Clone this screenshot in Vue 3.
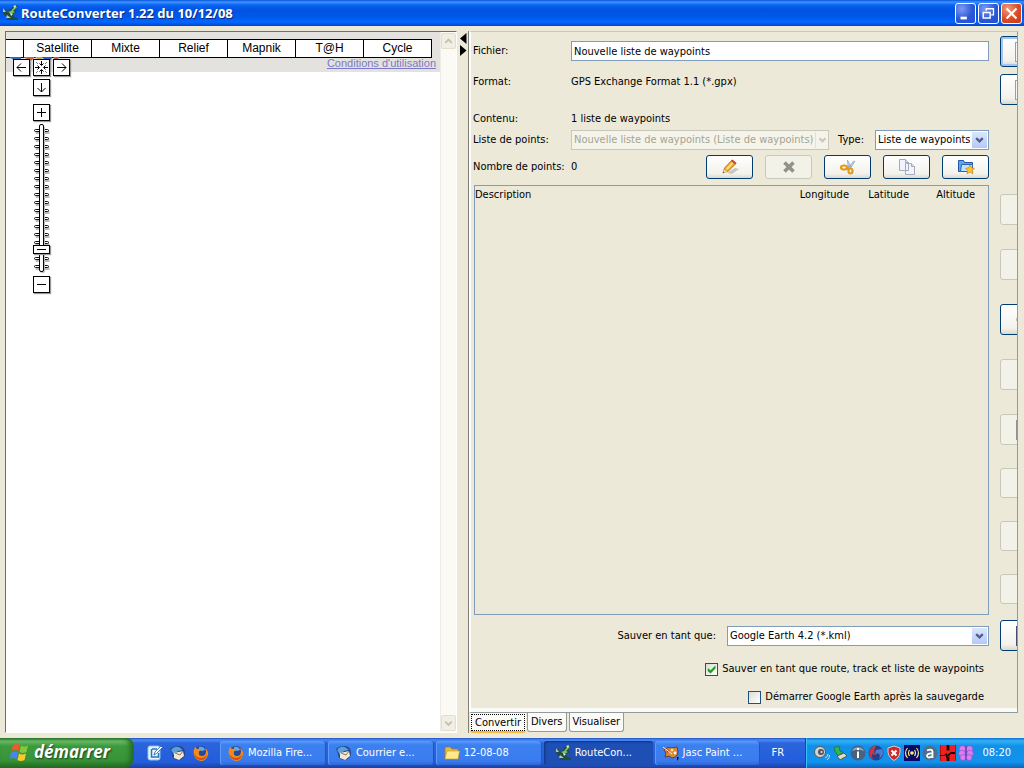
<script setup>
import { ref } from 'vue'

const mapTypes = ['Satellite', 'Mixte', 'Relief', 'Mapnik', 'T@H', 'Cycle']
const zoomTicks = Array.from({ length: 18 }, (_, i) => 6 + i * 8)
const zoomLevel = ref(2)
const fileName = ref('Nouvelle liste de waypoints')
const saveAll = ref(true)
const launchEarth = ref(false)
const columns = [
  { label: 'Description', name: 'desc' },
  { label: 'Longitude', name: 'lon' },
  { label: 'Latitude', name: 'lat' },
  { label: 'Altitude', name: 'alt' }
]
const sideGroups = [
  { name: 'files', items: [{ label: 'Ouvrir', kind: 'focus', mark: 'page' }, { label: 'Nouveau', kind: 'on', mark: 'page' }] },
  {
    name: 'moves',
    items: [
      { label: 'Premier', kind: 'off' },
      { label: 'Monter', kind: 'off' },
      { label: 'Ajouter', kind: 'on', mark: 'dot' },
      { label: 'Supprimer', kind: 'off' },
      { label: 'Descendre', kind: 'off', mark: 'bar' }
    ]
  },
  { name: 'orders', items: [{ label: 'Dernier', kind: 'off' }, { label: 'Inverser', kind: 'off' }, { label: 'Trier', kind: 'off' }] },
  { name: 'save', items: [{ label: 'Sauver', kind: 'on', mark: 'disk' }] }
]
</script>

<template>
  <div class="screen">
    <header class="titlebar">
      <svg class="icon" viewBox="0 0 16 16" aria-hidden="true">
        <path d="M1 3l4 3 3-1 4-5 4 1-3 4 2 2-4 2 1 3 4 1v2H5l1-3-4-2z" fill="#234a3c" />
        <path d="M2 4l4 3 3-1 4-5 2 1-4 4 2 1-4 2z" fill="#78c46a" />
        <path d="M8 8l3 1-2 2zM11 1l3-1-1 3z" fill="#d8efe0" /><path d="M1 3l3 4H1zM5 10l4 3H4z" fill="#a9c7c0" />
      </svg>
      <h1>RouteConverter 1.22 du 10/12/08</h1>
      <button class="win" aria-label="Réduire"><svg viewBox="0 0 21 21"><path d="M5 14h7v3H5z" fill="#fff" /></svg></button>
      <button class="win" aria-label="Restaurer">
        <svg viewBox="0 0 21 21" fill="none" stroke="#fff"><path d="M8 7.500V5h8v7h-2.500M8 5.500h8" stroke-width="1.400" /><path d="M4.700 9.500h7.600v6H4.700zM4.500 9.500h8" stroke-width="1.600" /></svg>
      </button>
      <button class="win close" aria-label="Fermer"><svg viewBox="0 0 21 21"><path d="M5 5l11 11M16 5L5 16" stroke="#fff" stroke-width="2.400" /></svg></button>
    </header>

    <main class="work">
      <section class="mapframe" aria-label="Carte">
        <div class="map">
          <div class="strip">
            <div class="types">
              <button class="type first" aria-label="Plan"></button>
              <button v-for="t in mapTypes" :key="t" class="type">{{ t }}</button>
            </div>
            <a class="terms" href="#">Conditions d'utilisation</a>
          </div>
          <div class="controls">
            <svg class="logo" viewBox="0 0 56 8" aria-hidden="true">
              <path d="M0 0h12v3l-4 2z" fill="#3466b8" /><path d="M14 0h12l-4 4z" fill="#c8623c" /><path d="M26 0h8l-3 5z" fill="#d3a545" /><path d="M34 0h9l-2 7-5-1z" fill="#315fa8" /><path d="M44 0h7l-4 4z" fill="#b75b41" />
            </svg>
            <div class="pan">
              <button class="pad" aria-label="Gauche"><svg viewBox="0 0 15 15"><path d="M12 7.500H3M7 3.500l-4 4 4 4" /></svg></button>
              <button class="pad" aria-label="Centrer"><svg viewBox="0 0 15 15"><path d="M7.500 1v4M5.500 3.500l2 2 2-2M7.500 14v-4M5.500 11.500l2-2 2 2M1 7.500h4M3.500 5.500l2 2-2 2M14 7.500h-4M11.500 5.500l-2 2 2 2M2.500 2.500l1 1M12.500 2.500l-1 1M2.500 12.500l1-1M12.500 12.500l-1-1" /></svg></button>
              <button class="pad" aria-label="Droite"><svg viewBox="0 0 15 15"><path d="M3 7.500h9M8 3.500l4 4-4 4" /></svg></button>
            </div>
            <button class="pad" aria-label="Bas"><svg viewBox="0 0 15 15"><path d="M7.500 3v9M3.500 8l4 4 4-4" /></svg></button>
            <button class="pad plus" aria-label="Zoom avant"><svg viewBox="0 0 15 15"><path d="M7.500 3v9M3 7.500h9" /></svg></button>
            <div class="scale">
              <svg viewBox="0 0 17 149" aria-hidden="true">
                <g v-for="y in zoomTicks" :key="y">
                  <rect x="2.500" :y="y + 1" width="14" height="3" rx="1" fill="#bbb" />
                  <rect x="1.500" :y="y - 0.500" width="14" height="2" rx="1" fill="#fff" stroke="#111" />
                </g>
                <rect x="7" y="2" width="5" height="147" rx="2" fill="#bbb" />
                <rect x="6.500" y="0.500" width="4" height="147" rx="1.500" fill="#fff" stroke="#000" />
              </svg>
              <input v-model="zoomLevel" type="range" min="0" max="15" aria-label="Niveau de zoom" />
            </div>
            <button class="pad" aria-label="Zoom arrière"><svg viewBox="0 0 15 15"><path d="M3 7.500h9" /></svg></button>
          </div>
        </div>
        <div class="scrollbar">
          <button aria-label="Défiler vers le haut"><svg viewBox="0 0 14 14"><path d="M3.500 9L7 5.500 10.500 9" /></svg></button>
          <button aria-label="Défiler vers le bas"><svg viewBox="0 0 14 14"><path d="M3.500 5.500L7 9l3.500-3.500" /></svg></button>
        </div>
      </section>

      <div class="divider">
        <button aria-label="Replier à gauche"><svg viewBox="0 0 7 11"><path d="M6.500 0v11L0 5.500z" /></svg></button>
        <button aria-label="Replier à droite"><svg viewBox="0 0 7 11"><path d="M0 0v11l6.500-5.500z" /></svg></button>
      </div>

      <section class="right">
        <div class="panel">
          <form class="form" @submit.prevent>
            <div class="row file"><label for="file">Fichier:</label><input id="file" v-model="fileName" type="text" /></div>
            <div class="row format"><span>Format:</span><span>GPS Exchange Format 1.1 (*.gpx)</span></div>
            <div class="row content"><span>Contenu:</span><span>1 liste de waypoints</span></div>
            <div class="row list">
              <label for="list">Liste de points:</label>
              <div class="pair">
                <span class="combo off grow">
                  <select id="list" disabled><option>Nouvelle liste de waypoints (Liste de waypoints)</option></select>
                  <i><svg viewBox="0 0 15 17"><path d="M4 6.500L7.500 10 11 6.500" /></svg></i>
                </span>
                <label for="type">Type:</label>
                <span class="combo kind">
                  <select id="type"><option>Liste de waypoints</option></select>
                  <i><svg viewBox="0 0 15 17"><path d="M4 6.500L7.500 10 11 6.500" /></svg></i>
                </span>
              </div>
            </div>
            <div class="row count">
              <span>Nombre de points:</span>
              <div class="pair">
                <span class="grow">0</span>
                <div class="tools">
                  <button type="button" class="tool" aria-label="Renommer">
                    <svg viewBox="0 0 18 16"><path d="M6 14l8-5 4 1-7 5z" fill="#c9c5b8" /><path d="M2 14l1.500-5L11 1l4 3.500L7.500 12z" fill="#f0a52c" stroke="#99611c" stroke-width=".7" /><path d="M5 9.500L12 2l1.500 1L6.500 11z" fill="#ffdc78" /><path d="M10 2l1.500-1.500L15.500 4 14 5.500z" fill="#d8412c" /><path d="M2 14l1-3.500L6 13z" fill="#f6dfb8" /><path d="M2 14l.5-1.500 1 1z" fill="#333" /></svg>
                  </button>
                  <button type="button" class="tool" disabled aria-label="Supprimer"><svg viewBox="0 0 18 16"><path d="M4.500 3.500l9 9M13.500 3.500l-9 9" stroke="#929289" stroke-width="3.600" /></svg></button>
                  <button type="button" class="tool" aria-label="Couper">
                    <svg viewBox="0 0 18 16"><path d="M9 9l5-6 2-1-5 8zM9 8L8.500 1l3.500 7z" fill="#c3d3ea" stroke="#8293b1" stroke-width=".6" /><g fill="none" stroke="#e69917" stroke-width="2.200"><ellipse cx="5" cy="8.500" rx="3" ry="2" /><ellipse cx="11.500" cy="12" rx="2" ry="2.500" /><path d="M7.500 9.500l3 1" /></g></svg>
                  </button>
                  <button type="button" class="tool" aria-label="Copier">
                    <svg viewBox="0 0 18 16"><path d="M1.500.5h6l3 3v8h-9zM7.500 4.500h6l3 3v8h-9z" fill="#f2f4fb" stroke="#a6aabd" /><path d="M7.500.5v3h3M13.500 4.500v3h3" fill="#dde2f4" stroke="#a6aabd" /></svg>
                  </button>
                  <button type="button" class="tool" aria-label="Ajouter aux favoris">
                    <svg viewBox="0 0 18 16"><path d="M1.500 1.500h5l1 2h8v9h-14z" fill="#5aa7ee" stroke="#2257a5" /><path d="M4.500 5.500h11v7h-12z" fill="#bfe2ff" stroke="#2b66b5" /><path d="M13 6l1.500 3 3 .3-2.200 2.200.7 3.300-3-1.700-3 1.700.7-3.300-2.200-2.200 3-.3z" fill="#ffc62e" stroke="#d88b16" stroke-width=".8" /></svg>
                  </button>
                </div>
              </div>
            </div>
            <div class="tablebox">
              <table>
                <thead><tr><th v-for="c in columns" :key="c.name" :class="c.name" scope="col">{{ c.label }}</th></tr></thead>
                <tbody></tbody>
              </table>
            </div>
            <div class="saverow">
              <label for="save">Sauver en tant que:</label>
              <span class="combo target">
                <select id="save"><option>Google Earth 4.2 (*.kml)</option></select>
                <i><svg viewBox="0 0 15 17"><path d="M4 6.500L7.500 10 11 6.500" /></svg></i>
              </span>
            </div>
            <label class="check"><input v-model="saveAll" type="checkbox" />Sauver en tant que route, track et liste de waypoints</label>
            <label class="check"><input v-model="launchEarth" type="checkbox" />Démarrer Google Earth après la sauvegarde</label>
          </form>
          <aside class="side">
            <div v-for="g in sideGroups" :key="g.name" class="group" :class="g.name">
              <button v-for="b in g.items" :key="b.label" class="edge" :class="[b.kind, b.mark]" :aria-label="b.label"></button>
            </div>
          </aside>
        </div>
        <nav class="tabs">
          <button class="tab active"><span>Convertir</span></button>
          <button class="tab">Divers</button>
          <button class="tab">Visualiser</button>
        </nav>
      </section>
    </main>

    <footer class="taskbar">
      <button class="start">
        <svg viewBox="0 0 20 18" aria-hidden="true"><path d="M3 2q3-2 7 0L8.500 8Q5 6 1.500 8z" fill="#ee5a2c" /><path d="M11 2.500q3 2 7 0L16.500 9q-4 2-7 0z" fill="#83c83c" /><path d="M1.200 9.500q3-2 7 0L6.500 16q-3.500-2-7 0z" fill="#4a86ea" /><path d="M9 10.500q3 2 7 0L14.500 17q-4 2-7 0z" fill="#fac92c" /></svg>
        <span>démarrer</span>
      </button>
      <div class="quick">
        <button aria-label="Bureau"><svg class="icon" viewBox="0 0 16 16"><rect x="1" y="1" width="12" height="14" rx="2" fill="#e8f5ff" stroke="#8dc1ed" /><path d="M5 4h5M4.500 4v8h7V8" fill="none" stroke="#2b73b8" stroke-width="1.500" /><path d="M7 10l1-3 6-6 1.500 1.500-6 6z" fill="#fff" stroke="#2a6fb0" stroke-width=".9" /></svg></button>
        <button aria-label="Thunderbird"><svg class="icon" viewBox="0 0 16 16"><path d="M0 4Q3 1 9 1q6 1 6 7 0 6-7 7-6-1-6-6z" fill="#23457e" /><path d="M1 5Q4 1 9 2l4 3-5 1-4 4z" fill="#5aa0df" /><path d="M4 8l9-2 1 5-5 4-5-2z" fill="#f3e8d5" /><path d="M5 8l5 2 3-4" fill="none" stroke="#8f775d" /></svg></button>
        <button aria-label="Firefox"><svg class="icon" viewBox="0 0 16 16"><circle cx="8" cy="8" r="7" fill="#264a9a" /><path d="M6 2q5-1 6 3l-3 1-3-1z" fill="#63a8e6" /><path d="M2 2l2 2q3-1 4 1L6 6.500Q5 11 9 11q4 0 4-5l-1-3q4 3 3 7-2 6-7 6-6-1-7-6Q0 5 2 2z" fill="#f28a1c" /><path d="M1 8q1 7 7 7 5 0 6-6-2 4-6 4-5 0-7-5z" fill="#d24d16" /></svg></button>
      </div>
      <div class="tasks">
        <button class="task"><svg class="icon" viewBox="0 0 16 16"><circle cx="8" cy="8" r="7" fill="#264a9a" /><path d="M6 2q5-1 6 3l-3 1-3-1z" fill="#63a8e6" /><path d="M2 2l2 2q3-1 4 1L6 6.500Q5 11 9 11q4 0 4-5l-1-3q4 3 3 7-2 6-7 6-6-1-7-6Q0 5 2 2z" fill="#f28a1c" /><path d="M1 8q1 7 7 7 5 0 6-6-2 4-6 4-5 0-7-5z" fill="#d24d16" /></svg>Mozilla Fire...</button>
        <button class="task"><svg class="icon" viewBox="0 0 16 16"><path d="M0 4Q3 1 9 1q6 1 6 7 0 6-7 7-6-1-6-6z" fill="#23457e" /><path d="M1 5Q4 1 9 2l4 3-5 1-4 4z" fill="#5aa0df" /><path d="M4 8l9-2 1 5-5 4-5-2z" fill="#f3e8d5" /><path d="M5 8l5 2 3-4" fill="none" stroke="#8f775d" /></svg>Courrier e...</button>
        <button class="task"><svg class="icon" viewBox="0 0 16 16"><path d="M1 3l1-1h4l2 2h6v10H1z" fill="#e9b93c" stroke="#a97a1b" stroke-width=".7" /><path d="M3 6h12.500L14 14H1z" fill="#ffe88c" stroke="#c59a30" stroke-width=".6" /></svg>12-08-08</button>
        <button class="task current"><svg class="icon" viewBox="0 0 16 16"><path d="M1 3l4 3 3-1 4-5 4 1-3 4 2 2-4 2 1 3 4 1v2H5l1-3-4-2z" fill="#234a3c" /><path d="M2 4l4 3 3-1 4-5 2 1-4 4 2 1-4 2z" fill="#78c46a" /><path d="M8 8l3 1-2 2zM11 1l3-1-1 3z" fill="#d8efe0" /><path d="M1 3l3 4H1zM5 10l4 3H4z" fill="#a9c7c0" /></svg>RouteCon...</button>
        <button class="task"><svg class="icon" viewBox="0 0 16 16"><path d="M1 5q4-4 8-2l5-1 1 5q0 5-6 6l-3-2-4 1 1-4z" fill="#d78b3d" stroke="#5c2a12" stroke-width=".8" /><circle cx="5" cy="6" r="1.500" fill="#d22c22" /><circle cx="9" cy="5" r="1.400" fill="#ffe46c" /><circle cx="12" cy="8" r="1.400" fill="#f7f7f7" /><path d="M0 2l9 7" stroke="#fff0c0" /><path d="M14 12h1.500v2L14 16z" fill="#111" /></svg>Jasc Paint ...</button>
      </div>
      <span class="lang">FR</span>
      <div class="tray">
        <svg class="icon" viewBox="0 0 16 16"><circle cx="6" cy="7" r="5.500" fill="#d4d5d2" stroke="#55585c" /><circle cx="7" cy="7" r="3" fill="#4c5055" /><circle cx="7.500" cy="7" r="1.200" fill="#ccc" /><path d="M11 13q3-1 3-4M13 15q3-2 2.500-5" fill="none" stroke="#c6daf2" /></svg>
        <svg class="icon" viewBox="0 0 16 16"><path d="M2 3l5-2 1 5 3 1-5 4-3-5z" fill="#36b54a" stroke="#1b6a30" stroke-width=".7" /><path d="M5 11l7-3 3 3-7 4z" fill="#d7dfd2" stroke="#485a50" /></svg>
        <svg class="icon" viewBox="0 0 16 16"><circle cx="8" cy="8" r="7.500" fill="#49627f" /><path d="M2 6a6.500 6 0 0 1 12 0q-6-3-12 0z" fill="#92a8bf" /><path d="M7 6.500h2V13H7zM7 3h2v2H7z" fill="#fff" /></svg>
        <svg class="icon" viewBox="0 0 16 16"><circle cx="8" cy="8" r="7.500" fill="#24408f" /><path d="M9 0Q2 1 1 8q0 5 5 7-3-3-2-6l3 1Q5 4 9 0z" fill="#c9363c" /><path d="M8 5l6-1q3 6-3 10 2-5-1-6l-3 2z" fill="#4a7dd0" /></svg>
        <svg class="icon" viewBox="0 0 16 16"><path d="M8 1l6 2q1 9-6 12.500Q1 12 2 3z" fill="#cf2a2a" stroke="#dcc9ca" /><path d="M5.500 5.500l5 5M10.500 5.500l-5 5" stroke="#fff" stroke-width="2" /></svg>
        <svg class="icon" viewBox="0 0 16 16"><path d="M0 0h16v16H0z" fill="#080866" /><circle cx="8" cy="8" r="1.800" fill="#ffef78" /><path d="M5.500 5q-2 3 0 6M10.500 5q2 3 0 6M3.500 3q-4 5 0 10M12.500 3q4 5 0 10" fill="none" stroke="#f1e78a" stroke-width="1.200" /></svg>
        <svg class="icon" viewBox="0 0 16 16"><circle cx="8" cy="8" r="7.500" fill="#4f6d8c" /><path d="M5 5.500q5-2 5.500 1V13M10.500 8.500Q5 8 5 11q1 3 5.500 0" fill="none" stroke="#fff" stroke-width="1.800" /></svg>
        <svg class="icon" viewBox="0 0 16 16"><path d="M0 0h16v16H0z" fill="#a81414" /><path d="M1 0h5v6h4V0h5v16h-5v-6H6v6H1z" fill="#ee2020" /><path d="M0 10h4l3-2v2l4-3h4v2h-4l-5 4v-3l-2 1H0zM7 0h2v5H7zM7 12h2v4H7z" fill="#190808" /></svg>
        <svg class="icon" viewBox="0 0 16 16"><g fill="#d980ee" stroke="#9d50cc" stroke-width=".7"><circle cx="4.500" cy="4" r="3.300" /><circle cx="11.500" cy="4" r="3.300" /><circle cx="4" cy="8.500" r="3.300" /><circle cx="12" cy="8.500" r="3.300" /><circle cx="5" cy="12.500" r="3" /><circle cx="11" cy="12.500" r="3" /></g><path d="M8 1v14" stroke="#6a2cab" /></svg>
        <time>08:20</time>
      </div>
    </footer>
  </div>
</template>

<style>
body { margin: 0; background: #ece9d8; }
</style>

<style scoped>
* { box-sizing: border-box; }
.screen { --ui: "DejaVu Sans Condensed", "DejaVu Sans", sans-serif; min-height: 100vh; display: flex; flex-direction: column; background: #ece9d8; font: 11px/14px var(--ui); color: #000; }
button, input, select { font: inherit; color: inherit; margin: 0; padding: 0; }
svg { display: block; }
.icon { width: 16px; height: 16px; flex: none; }

.titlebar { height: 26px; display: flex; align-items: center; gap: 2px; padding: 0 2px; color: #fff; background: linear-gradient(#0a55dc 0, #3d95ff 2px, #0a63f2 5px, #0053e0 10px, #0058ea 17px, #0368fe 22px, #0143cf 26px); }
.titlebar h1 { flex: 1; margin: 0; padding-left: 1px; font: bold 13px/18px "Noto Sans", sans-serif; text-shadow: 1px 1px #0a2a80; white-space: nowrap; }
.win { width: 21px; height: 21px; border: 1px solid #fff; border-radius: 3px; background: radial-gradient(circle at 30% 25%, #7d9cf2, #2c58d8 55%, #1f4fd5); }
.win svg { width: 19px; height: 19px; }
.win.close { background: radial-gradient(circle at 30% 25%, #f09a7c, #da4a25 55%, #c53d18); }

.work { flex: 1; display: grid; grid-template-columns: 452fr 12px 549fr; padding: 5px 6px 5px 5px; }
.mapframe { display: flex; border: 1px solid #fff; border-top-color: #716f64; border-left-color: #716f64; }
.map { flex: 1; position: relative; background: #fff; }
.strip { height: 40px; padding: 7px 4px 0 0; background: #e4e2de; display: flex; flex-direction: column; align-items: flex-end; font-family: "Liberation Sans", Arial, sans-serif; }
.types { align-self: stretch; display: flex; margin-right: 4px; border: 1px solid #000; border-left: 0; font-size: 12px; line-height: 17px; }
.type { width: 68px; height: 17px; border: 0; border-left: 1px solid #000; background: #fff; }
.type.first { flex: 1; width: auto; border-left: 0; }
.terms { color: #7c78c8; font-size: 11px; line-height: 11px; }
.controls { position: absolute; left: 7px; top: 27px; width: 57px; display: flex; flex-direction: column; align-items: center; gap: 3px; }
.logo { position: absolute; left: -4px; top: -2px; width: 56px; height: 8px; }
.pan { position: relative; display: flex; gap: 3px; }
.pad { width: 17px; height: 17px; border: 1px solid #000; background: #fff; box-shadow: 1px 1px 1px #999; }
.pad svg { width: 15px; height: 15px; fill: none; stroke: #000; }
.plus { margin-top: 5px; }
.scale { position: relative; width: 17px; height: 149px; }
.scale svg { width: 17px; height: 149px; }
.scale input { position: absolute; inset: 0; width: 17px; height: 149px; appearance: none; background: transparent; writing-mode: vertical-lr; direction: rtl; }
.scale input::-webkit-slider-thumb { appearance: none; width: 17px; height: 9px; border: 1px solid #000; background: linear-gradient(#000, #000) center / 9px 1px no-repeat #fff; box-shadow: 1px 1px 1px #999; }
.scrollbar { width: 16px; display: flex; flex-direction: column; justify-content: space-between; padding: 1px 0; background: #fbfaf5; border-left: 1px solid #eeede5; }
.scrollbar button { width: 15px; height: 16px; border: 1px solid #e2dfcf; border-radius: 2px; background: #f1efe4; }
.scrollbar svg { width: 13px; height: 14px; fill: none; stroke: #c3c0b0; stroke-width: 2; }

.divider { display: flex; flex-direction: column; align-items: flex-end; gap: 1px; padding: 2px 1px 0 0; border-right: 1px solid #808076; }
.divider button { border: 0; background: none; }
.divider svg { width: 7px; height: 11px; }

.right { display: flex; flex-direction: column; min-width: 0; }
.panel { flex: 1; display: flex; border: 1px solid #919b9c; border-top-color: #c9c7ba; border-left: 2px solid #fff; box-shadow: inset 0 -4px #fbfaf6; }
.form { flex: 1; min-width: 0; display: flex; flex-direction: column; padding: 9px 0 8px 2px; }
.row { display: grid; grid-template-columns: 98px 1fr; align-items: center; }
.file input { width: 100%; height: 20px; padding: 0 2px; border: 1px solid #7f9db9; background: #fff; outline: 0; }
.format { margin-top: 14px; }
.content { margin-top: 23px; }
.list { margin-top: 4px; }
.pair { display: flex; align-items: center; }
.grow { flex: 1; min-width: 0; }
.pair > label { margin: 0 11px 0 9px; }
.combo { position: relative; display: block; height: 20px; }
.combo select { width: 100%; height: 20px; padding: 0 18px 0 2px; border: 1px solid #7f9db9; border-radius: 0; background: #fff; appearance: none; opacity: 1; }
.combo i { position: absolute; right: 2px; top: 2px; width: 15px; height: 16px; background: linear-gradient(#dbe5fe, #b4c9fa); pointer-events: none; }
.combo svg { width: 15px; height: 16px; fill: none; stroke: #4d6185; stroke-width: 2.500; }
.off select { padding-right: 12px; border-color: #c9c7ba; background: #f5f4ea; color: #a5a392; }
.combo.off i { right: 1px; width: 13px; background: none; border-left: 1px solid #e3e0d1; }
.off svg { width: 13px; stroke: #c9c7ba; }
.kind { width: 114px; }
.count { margin-top: 5px; }
.tools { display: flex; gap: 12px; }
.tool { width: 47px; height: 24px; display: grid; place-items: center; border: 1px solid #003c74; border-radius: 3px; background: linear-gradient(#fff, #f3f2ec 80%, #dcd8cc); }
.tool:disabled { border-color: #c9c7ba; background: #f3f2e9; }
.tool svg { width: 18px; height: 16px; }
.tablebox { flex: 1; margin-top: 6px; border: 1px solid #7f9db9; margin-left: 1px; }
table { width: 100%; border-collapse: collapse; table-layout: fixed; }
th { padding: 2px 0 0; font-weight: normal; text-align: right; }
.desc { text-align: left; }
.lon { width: 66px; }
.lat { width: 60px; }
.alt { width: 79px; padding-right: 13px; }
.saverow { display: flex; justify-content: flex-end; align-items: center; gap: 11px; margin: 11px 0 16px; }
.target { width: 262px; }
.check { align-self: flex-end; display: flex; align-items: center; gap: 4px; margin: 0 5px 14px 0; }
.check:last-child { margin-bottom: 0; }
.check input { appearance: none; width: 13px; height: 13px; border: 1px solid #1c5180; background: linear-gradient(135deg, #dcdcd7, #fff); }
.check input:checked::before { content: ""; display: block; width: 11px; height: 11px; background: #21a121; clip-path: polygon(15% 42%, 40% 62%, 85% 15%, 85% 45%, 40% 92%, 15% 70%); }
.side { width: 28px; padding: 4px 0 0 11px; overflow: hidden; display: flex; flex-direction: column; }
.group { display: flex; flex-direction: column; gap: 24px; width: 40px; }
.files { gap: 7px; margin-bottom: 89px; }
.moves { margin-bottom: 23px; }
.orders { gap: 23px; margin-bottom: 16px; }
.edge { height: 31px; border: 1px solid #003c74; border-radius: 3px; background: linear-gradient(#fff, #f3f2ec 80%, #dcd8cc); }
.orders .edge { height: 30px; }
.edge.off { border-color: #c9c7ba; background: #f3f2e9; }
.edge.focus { box-shadow: inset 0 0 0 2px #a9c3f0; }
.edge.page::before, .edge.disk::before { content: ""; display: block; width: 12px; height: 18px; margin-left: 14px; border: 1px solid #9a9daa; background: #f7f8fc; }
.edge.disk::before { margin-left: 15px; background: #6b6690; border-color: #4c4a70; }
.edge.bar::before { content: ""; display: block; width: 10px; height: 20px; margin-left: 15px; background: #92928c; }
.edge.dot::before { content: ""; display: block; width: 3px; height: 3px; margin-left: 15px; background: #c2c2b8; }

.tabs { display: flex; align-items: flex-start; gap: 2px; height: 20px; }
.tab { height: 19px; padding: 0 3px; border: 1px solid #919b9c; border-top: 0; border-radius: 0 0 3px 3px; background: #fbfaf7; }
.tab.active { height: 20px; padding: 1px 1px; border: 0; border-bottom: 2px solid #ffb83c; margin: 0 -1px 0 1px; }
.tab.active span { display: block; height: 17px; padding: 1px 3px; border: 1px dotted #000; }

.taskbar { height: 30px; display: flex; color: #fff; background: linear-gradient(#1f4fc0 0, #4b8cf5 2px, #2b64dc 5px, #245ddb 24px, #1941a5 30px); }
.start { width: 134px; display: flex; align-items: center; gap: 4px; padding: 0 0 2px 10px; border: 0; border-radius: 0 8px 10px 0; background: linear-gradient(#2c7a2c 0, #6fbf6c 3px, #3c9a3c 8px, #399439 22px, #226b22 30px); box-shadow: inset -4px 0 5px #236b23; font: italic bold 17px/20px "Open Sans", sans-serif; color: #fff; text-shadow: 1px 1px 2px #173f17; }
.start svg { width: 20px; height: 18px; }
.quick { display: flex; align-items: center; gap: 7px; padding: 0 11px 0 13px; }
.quick button { border: 0; background: none; }
.tasks { flex: 1; display: flex; align-items: center; gap: 2px; min-width: 0; }
.task { flex: 1; min-width: 0; height: 24px; display: flex; align-items: center; gap: 4px; padding: 0 8px; border: 0; border-radius: 3px; background: linear-gradient(#5a9bff, #3c80f0 4px, #3a7cee 20px, #2d66d6); box-shadow: inset 1px 0 #5f9cf8, inset -1px 0 #2355c0; white-space: nowrap; }
.task.current { padding-left: 11px; background: #1d4fb5; box-shadow: inset 1px 1px 2px #123480; }
.lang { width: 45px; padding-left: 11px; line-height: 30px; }
.tray { display: flex; align-items: center; gap: 2px; padding: 0 13px 0 8px; border-left: 1px solid #0b4aa8; background: linear-gradient(#0f74d0 0, #32b0f6 3px, #1290e8 8px, #1192ec 24px, #0c64bc 30px); box-shadow: inset 1px 0 #3cc0f8; }
.tray time { margin-left: 6px; }
</style>
